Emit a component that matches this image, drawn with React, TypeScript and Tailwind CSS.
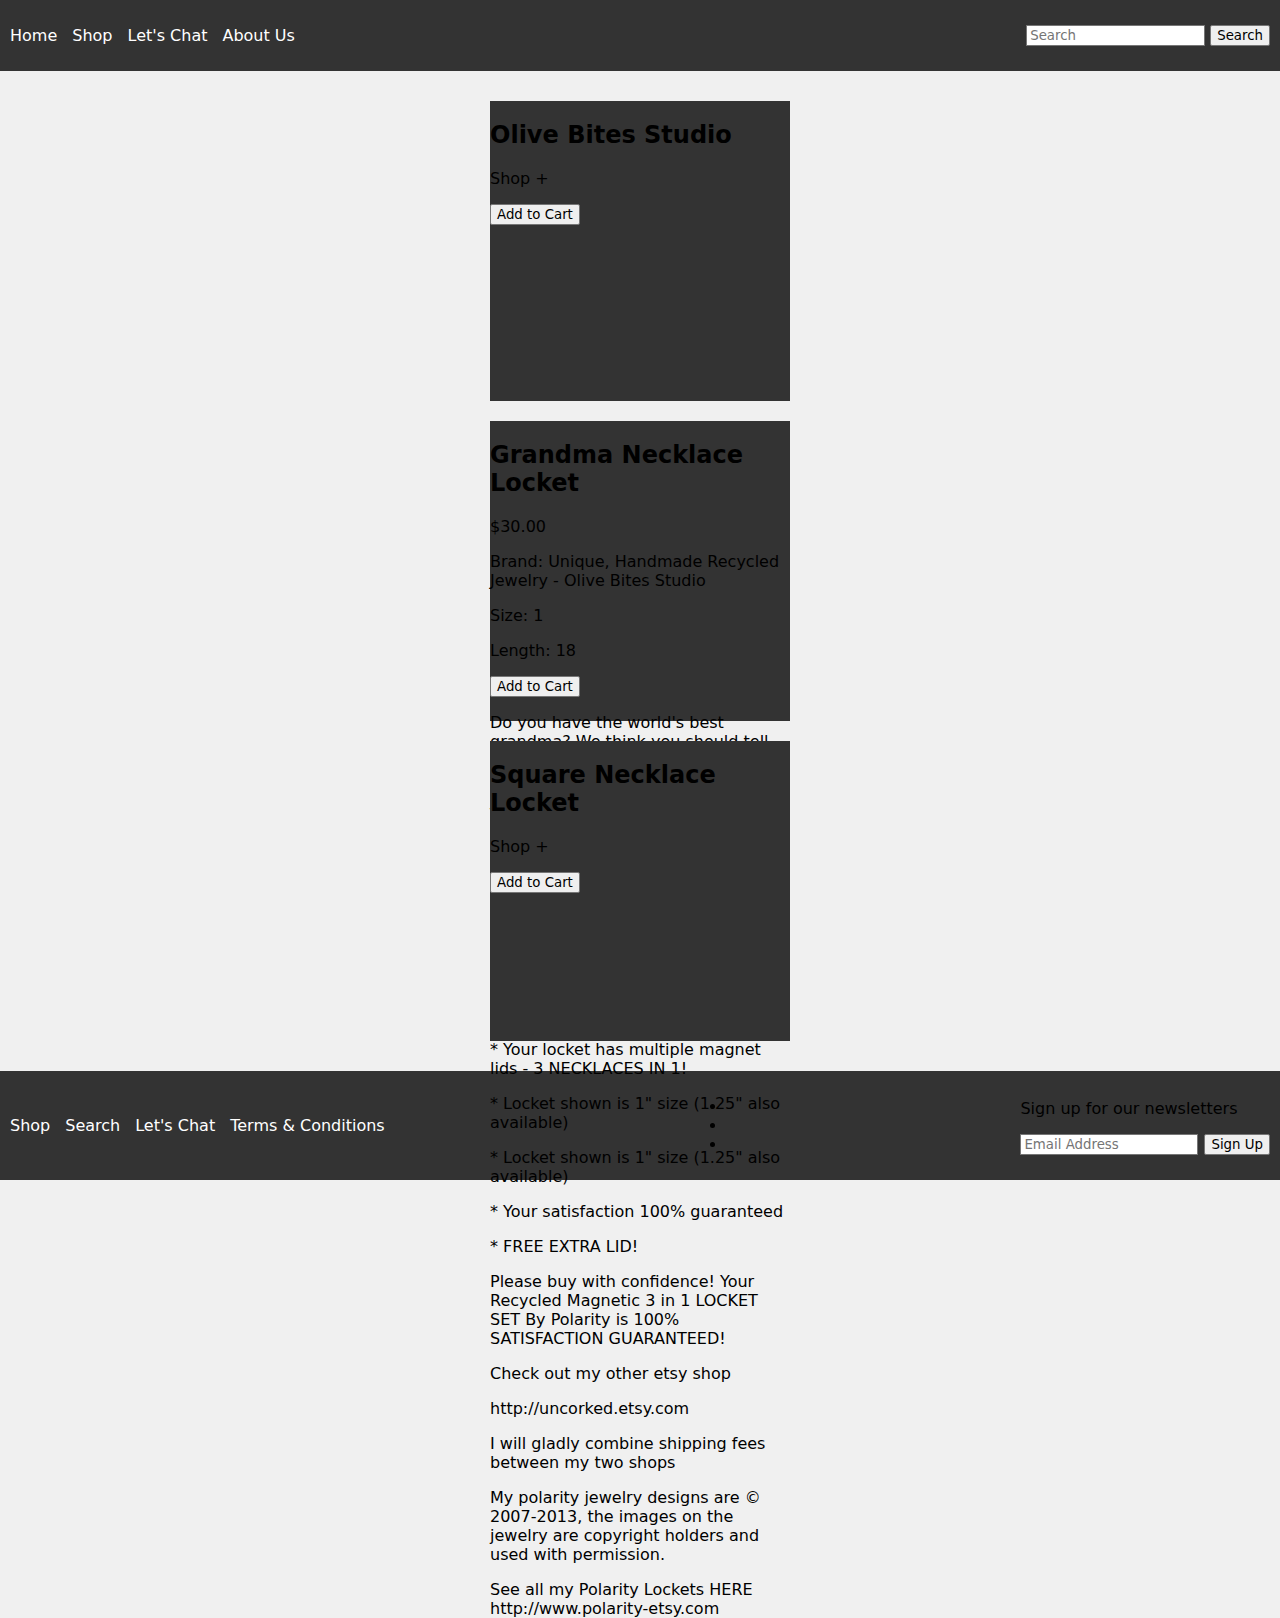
import React from 'react'

const headerLinks = ['Home', 'Shop', "Let's Chat", 'About Us']
const footerLinks = ['Shop', 'Search', "Let's Chat", 'Terms & Conditions']

// native-looking form controls (preflight strips the browser defaults)
const btn =
  'block h-[21px] rounded-[2px] border border-[#767676] bg-[#efefef] px-[6px] text-[13.33px] text-black'
const input =
  'h-[21px] border border-[#767676] bg-white px-[3px] text-[13.33px] text-black placeholder:text-[#757575] outline-none'

function CartButton() {
  return <button className={btn}>Add to Cart</button>
}

export default function App() {
  return (
    <div className="min-h-screen bg-[#f0f0f0] font-['DejaVu_Sans','Liberation_Sans',sans-serif] text-[16px] leading-[normal] text-black">
      {/* Header */}
      <header className="flex items-center justify-between bg-[#333] p-[10px]">
        <nav>
          <ul className="my-4 flex gap-[15px]">
            {headerLinks.map((l) => (
              <li key={l}>
                <a className="text-white">{l}</a>
              </li>
            ))}
          </ul>
        </nav>
        <form className="flex items-center gap-[5px]" onSubmit={(e) => e.preventDefault()}>
          <input type="text" placeholder="Search" className={`${input} w-[179px]`} />
          <button className={btn}>Search</button>
        </form>
      </header>

      {/* Products */}
      <main className="flex flex-col items-center gap-5 py-[30px]">
        <div className="relative h-[300px] w-[300px] bg-[#333]">
          <h2 className="my-[0.83em] text-[24px] font-bold">Olive Bites Studio</h2>
          <p className="my-4">Shop +</p>
          <CartButton />
        </div>

        <div className="relative h-[300px] w-[300px] bg-[#333]">
          <h2 className="my-[0.83em] text-[24px] font-bold">Grandma Necklace Locket</h2>
          <p className="my-4">$30.00</p>
          <p className="my-4">Brand: Unique, Handmade Recycled Jewelry - Olive Bites Studio</p>
          <p className="my-4">Size: 1</p>
          <p className="my-4">Length: 18</p>
          <CartButton />
          <p className="my-4">
            Do you have the world's best grandma? We think you should tell
            <br />
            her! This locket makes a sweet
            <br />
            gift for Mother's Day.
          </p>
          <p className="my-4">
            The front reads "World's Best
            <br />
            Grandma" and the back is a
            <br />
            strong recycled magnet.
          </p>
          <p className="my-4">
            Each locket is handmade with
            <br />
            love in our studio.
          </p>
          <p className="my-4">
            Chain: 18" ball chain
            <br />
            is included.
          </p>
          <p className="my-4">
            Gift box included with
            <br />
            every order.
          </p>
          <p className="my-4">* Your locket has multiple magnet lids - 3 NECKLACES IN 1!</p>
          <p className="my-4">* Locket shown is 1" size (1.25" also available)</p>
          <p className="my-4">* Locket shown is 1" size (1.25" also available)</p>
          <p className="my-4">* Your satisfaction 100% guaranteed</p>
          <p className="my-4">* FREE EXTRA LID!</p>
          <p className="my-4">
            Please buy with confidence! Your Recycled Magnetic 3 in 1 LOCKET SET By Polarity is 100% SATISFACTION
            GUARANTEED!
          </p>
          <p className="my-4">Check out my other etsy shop</p>
          <p className="my-4">http://uncorked.etsy.com</p>
          <p className="my-4">I will gladly combine shipping fees between my two shops</p>
          <p className="my-4">
            My polarity jewelry designs are © 2007-2013, the images on the jewelry are copyright holders and used with
            permission.
          </p>
          <p className="my-4">See all my Polarity Lockets HERE http://www.polarity-etsy.com</p>
        </div>

        <div className="relative h-[300px] w-[300px] bg-[#333]">
          <h2 className="my-[0.83em] text-[24px] font-bold">Square Necklace Locket</h2>
          <p className="my-4">Shop +</p>
          <CartButton />
        </div>
      </main>

      {/* Footer */}
      <footer className="flex items-center justify-between bg-[#333] p-[10px]">
        <nav>
          <ul className="my-4 flex gap-[15px]">
            {footerLinks.map((l) => (
              <li key={l}>
                <a className="text-white">{l}</a>
              </li>
            ))}
          </ul>
        </nav>
        <ul className="my-4 list-disc pl-12">
          <li className="h-[19px]"></li>
          <li className="h-[19px]"></li>
          <li className="h-[19px]"></li>
        </ul>
        <div className="self-start pt-[2px]">
          <p className="my-4">Sign up for our newsletters</p>
          <form className="flex items-center gap-[6px]" onSubmit={(e) => e.preventDefault()}>
            <input type="email" placeholder="Email Address" className={`${input} w-[178px]`} />
            <button className={btn}>Sign Up</button>
          </form>
        </div>
      </footer>
    </div>
  )
}
